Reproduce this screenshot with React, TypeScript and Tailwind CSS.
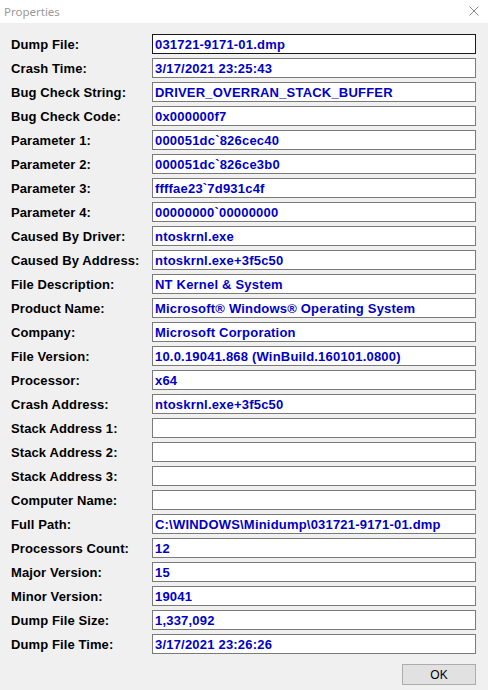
import React from 'react';

const ROWS: [string, string][] = [
  ['Dump File:', '031721-9171-01.dmp'],
  ['Crash Time:', '3/17/2021 23:25:43'],
  ['Bug Check String:', 'DRIVER_OVERRAN_STACK_BUFFER'],
  ['Bug Check Code:', '0x000000f7'],
  ['Parameter 1:', '000051dc`826cec40'],
  ['Parameter 2:', '000051dc`826ce3b0'],
  ['Parameter 3:', 'ffffae23`7d931c4f'],
  ['Parameter 4:', '00000000`00000000'],
  ['Caused By Driver:', 'ntoskrnl.exe'],
  ['Caused By Address:', 'ntoskrnl.exe+3f5c50'],
  ['File Description:', 'NT Kernel & System'],
  ['Product Name:', 'Microsoft® Windows® Operating System'],
  ['Company:', 'Microsoft Corporation'],
  ['File Version:', '10.0.19041.868 (WinBuild.160101.0800)'],
  ['Processor:', 'x64'],
  ['Crash Address:', 'ntoskrnl.exe+3f5c50'],
  ['Stack Address 1:', ''],
  ['Stack Address 2:', ''],
  ['Stack Address 3:', ''],
  ['Computer Name:', ''],
  ['Full Path:', 'C:\\WINDOWS\\Minidump\\031721-9171-01.dmp'],
  ['Processors Count:', '12'],
  ['Major Version:', '15'],
  ['Minor Version:', '19041'],
  ['Dump File Size:', '1,337,092'],
  ['Dump File Time:', '3/17/2021 23:26:26'],
];

export default function App() {
  return (
    <div className="w-[488px] h-[690px] bg-[#f0f0f0] flex flex-col overflow-hidden" style={{ fontFamily: '"Liberation Sans", Arial, sans-serif' }}>
      {/* title bar */}
      <div className="h-[23px] bg-white flex items-center justify-between pl-[4px] pr-[9px] flex-shrink-0">
        <span className="text-[11.5px] text-[#999999]" style={{ fontFamily: '"Segoe UI", "Noto Sans", sans-serif' }}>Properties</span>
        <svg width="10" height="10" viewBox="0 0 10 10" className="mt-[-2px]">
          <path d="M0.5 0.5 L9.5 9.5 M9.5 0.5 L0.5 9.5" stroke="#8a8a8a" strokeWidth="1" />
        </svg>
      </div>

      {/* fields */}
      <div className="flex flex-col gap-[4px] pt-[11px] pl-[11px] pr-[12px]">
        {ROWS.map(([label, value], i) => (
          <div key={label} className="flex items-center h-[20px]">
            <div className="w-[141px] text-[13px] font-bold text-black leading-none tracking-[0.1px]">{label}</div>
            <div className={`flex-1 h-[20px] bg-white border flex items-center pl-[2px] ${i === 0 ? 'border-[#1a1a1a]' : 'border-[#7a7a7a]'}`}>
              <span className="text-[13px] font-bold text-[#0000c8] leading-none whitespace-nowrap tracking-[0.2px]">{value}</span>
            </div>
          </div>
        ))}
      </div>

      {/* footer */}
      <div className="flex justify-end pr-[12px] pt-[10px]">
        <button className="w-[74px] h-[21px] bg-[#e1e1e1] border border-[#adadad] text-[12px] text-black flex items-center justify-center leading-none">
          OK
        </button>
      </div>
    </div>
  );
}
